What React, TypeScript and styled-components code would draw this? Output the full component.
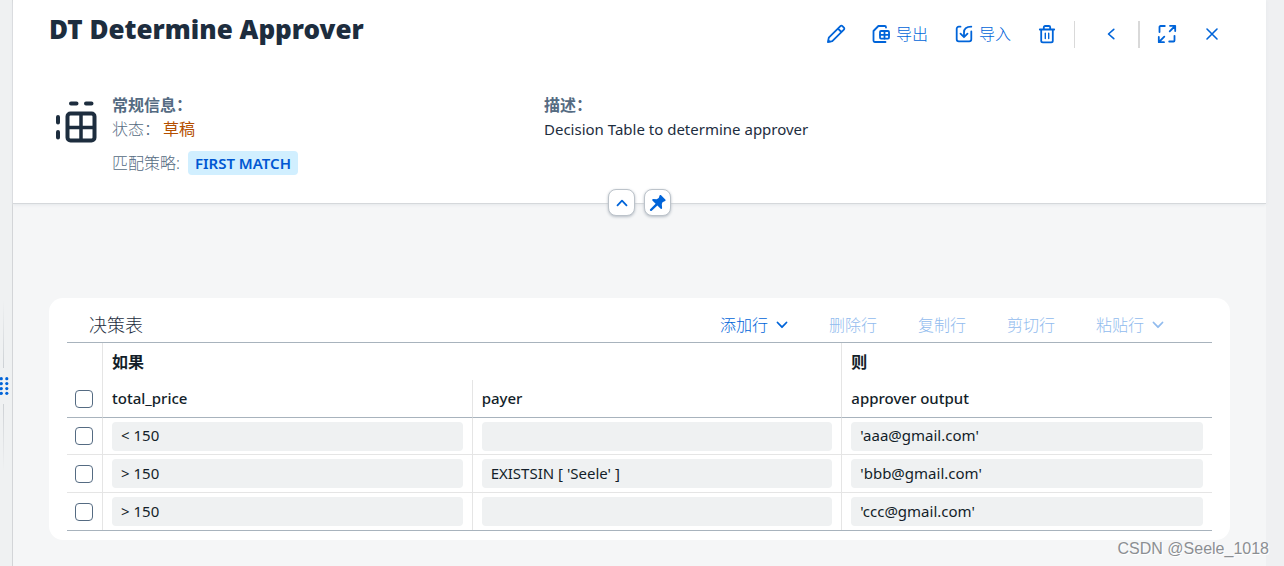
import React from "react";
import styled, { createGlobalStyle } from "styled-components";

const latin = `"Noto Sans", "Noto Sans CJK SC", sans-serif`;

const GlobalStyle = createGlobalStyle`
  *, *::before, *::after { box-sizing: border-box; }
  body {
    margin: 0;
    background: #f5f6f7;
    color: #1d2d3e;
    font: 15px/22px ${latin};
  }
  button, input { font: inherit; color: inherit; }
`;

const Page = styled.div`
  position: relative;
  display: flex;
  min-height: 100vh;
  overflow: hidden;
`;

const Splitter = styled.div`
  flex: none;
  display: flex;
  flex-direction: column;
  gap: 9px;
  width: 13px;
  padding-top: 300px;
  background: #eff1f2;
  border-right: 1px solid #d3d5d8;
`;

const SplitLine = styled.span<{ $fade: "top" | "bottom" }>`
  width: 1px;
  height: 68px;
  margin-left: 3px;
  background: linear-gradient(to ${(p) => p.$fade}, #cdd1d5, transparent);
`;

const Grip = styled.button`
  display: block;
  width: 10px;
  height: 18px;
  padding: 0;
  border: 0;
  background: none;
  svg { display: block; }
`;

const Main = styled.main`
  flex: 1;
  min-width: 0;
`;

const Gutter = styled.div`
  flex: none;
  width: 18px;
  background: #eff0f2;
`;

const Header = styled.header`
  position: relative;
  height: 204px;
  padding: 13px 36px 0;
  background: #fff;
  border-bottom: 1px solid #d5d8db;
  box-shadow: 0 1px 3px #e4e7ea;
`;

const TitleBar = styled.div`
  display: flex;
  justify-content: space-between;
  align-items: flex-start;
  height: 80px;
`;

const Title = styled.h1`
  margin: 0;
  font-size: 26px;
  line-height: 32px;
  font-weight: 900;
`;

const Actions = styled.div`
  display: flex;
  align-items: center;
  gap: 9px;
  padding-top: 3px;
`;

const Action = styled.button<{ $wide?: boolean }>`
  display: flex;
  align-items: center;
  justify-content: center;
  gap: 6px;
  min-width: 36px;
  height: 36px;
  padding: 0 ${(p) => (p.$wide ? 9 : 0)}px;
  border: 0;
  background: none;
  color: #0064d9;
  font-size: 16px;
  font-weight: 300;
  white-space: nowrap;
`;

const Divider = styled.span<{ $thick?: boolean }>`
  width: ${(p) => (p.$thick ? 2 : 1)}px;
  height: 27px;
  margin-right: ${(p) => (p.$thick ? 0 : 9)}px;
  background: #d9d9d9;
`;

const Facts = styled.div`
  display: grid;
  grid-template-columns: 495px 1fr;
`;

const General = styled.section`
  display: flex;
  gap: 15px;
  > svg { flex: none; margin: 8px 0 0 6px; }
`;

const FactTitle = styled.h2`
  margin: 0;
  color: #556b82;
  font-size: 16px;
  line-height: 24px;
  font-weight: 700;
`;

const Fact = styled.div`
  display: flex;
  align-items: center;
  gap: 3px;
  height: 24px;
  font-size: 16px;
  & + & { margin-top: 10px; }
`;

const FactLabel = styled.span`
  color: #556b82;
  font-weight: 300;
`;

const Status = styled.span`
  color: #b44f00;
`;

const Tag = styled.span`
  margin-left: 5px;
  padding: 0 7px;
  border-radius: 4px;
  background: #d1efff;
  color: #0057d2;
  font-size: 15px;
  line-height: 24px;
  font-weight: 600;
`;

const Description = styled.p`
  margin: 0;
  font-size: 15px;
  line-height: 24px;
`;

const HeaderToggles = styled.div`
  position: absolute;
  left: 0;
  right: 0;
  bottom: -13px;
  display: flex;
  justify-content: center;
  gap: 9px;
`;

const Toggle = styled.button`
  display: flex;
  align-items: center;
  justify-content: center;
  width: 27px;
  height: 27px;
  padding: 0;
  border: 1px solid #bcc3ca;
  border-radius: 8px;
  background: #fff;
  color: #0064d9;
  box-shadow: 0 1px 3px #b5bcc4;
`;

const Card = styled.section`
  margin: 94px 36px 26px;
  padding: 0 18px 9px;
  border-radius: 14px;
  background: #fff;
`;

const TableBar = styled.div`
  display: flex;
  align-items: center;
  justify-content: space-between;
  height: 44px;
  padding: 9px 32px 0 22px;
`;

const TableTitle = styled.h2`
  margin: 0;
  font-size: 18px;
  line-height: 26px;
  font-weight: 300;
`;

const TableActions = styled.div`
  display: flex;
  gap: 9px;
`;

const TableAction = styled.button`
  display: flex;
  align-items: center;
  gap: 8px;
  padding: 0 16px;
  border: 0;
  background: none;
  color: #0064d9;
  font-size: 16px;
  line-height: 24px;
  font-weight: 300;
  white-space: nowrap;
  &:disabled { color: #91bbee; }
`;

const Table = styled.table`
  width: 100%;
  table-layout: fixed;
  border-collapse: separate;
  border-spacing: 0;
  border-top: 1px solid #a8b3bd;
  border-bottom: 1px solid #a8b3bd;
`;

const CheckCol = styled.col`
  width: 36px;
`;

const HeadCell = styled.th<{ $group?: boolean; $last?: boolean; $check?: boolean }>`
  height: ${(p) => (p.$group ? 37 : 38)}px;
  padding: ${(p) => (p.$check ? "0 8px" : p.$group ? "0 9px" : "0 9px 2px")};
  border-right: ${(p) => (p.$last ? 0 : 1)}px solid #e5e5e5;
  border-bottom: ${(p) => (p.$group ? 0 : 1)}px solid #a8b3bd;
  color: #131e29;
  font-size: ${(p) => (p.$group ? 16 : 15)}px;
  line-height: 22px;
  font-weight: ${(p) => (p.$group ? 700 : 500)};
  text-align: left;
`;

const Cell = styled.td<{ $check?: boolean }>`
  height: 36px;
  padding: 0 ${(p) => (p.$check ? 8 : 9)}px;
  border-right: 1px solid #e5e5e5;
  &:last-child { border-right: 0; }
  tr + tr & { height: 38px; border-top: 1px solid #e5e5e5; }
`;

const Check = styled.input`
  appearance: none;
  display: block;
  width: 18px;
  height: 18px;
  margin: 0;
  border: 1px solid #556b82;
  border-radius: 4px;
  background: #fff;
`;

const Field = styled.input`
  display: block;
  width: 100%;
  height: 29px;
  padding: 0 9px 2px;
  border: 0;
  border-radius: 4px;
  background: #eff1f2;
  color: #131e29;
  font-size: 15px;
  line-height: 22px;
`;

const Watermark = styled.span`
  position: absolute;
  right: 15px;
  bottom: 6px;
  color: #8c8f93;
  font: 16px/22px "Liberation Sans", sans-serif;
  text-shadow: 1px 1px 0 #fff;
`;

const stroke = {
  fill: "none",
  stroke: "currentColor",
  strokeWidth: 1.8,
  strokeLinecap: "round" as const,
  strokeLinejoin: "round" as const,
};

const PencilIcon = () => (
  <svg width="20" height="20" viewBox="0 0 20 20" {...stroke} aria-hidden="true">
    <path d="M1.900 18.100l.9-4.400L14.400 2.100a1.400 1.400 0 0 1 2 0l1.500 1.500a1.400 1.400 0 0 1 0 2L6.300 17.200zM12 4.600l3.400 3.400M2.200 16.200l1.700 1.700" />
  </svg>
);

const ExportIcon = () => (
  <svg width="18" height="18" viewBox="0 0 18 18" {...stroke} aria-hidden="true">
    <path d="M14 2.600V2.200a1.200 1.200 0 0 0-1.200-1.200H6.400L1.500 6v9.800a1.200 1.200 0 0 0 1.200 1.200H13.500" />
    <rect x="8" y="6" width="9" height="7.600" rx="1" />
    <path d="M12.500 6v7.600M8 9.800h9" />
  </svg>
);

const ImportIcon = () => (
  <svg width="18" height="18" viewBox="0 0 18 18" {...stroke} aria-hidden="true">
    <path d="M5.500 1.700H3.700a2 2 0 0 0-2 2v10.600a2 2 0 0 0 2 2h10.600a2 2 0 0 0 2-2V6.500M16.300 1.700C12 1.700 9 3.700 9 7.500v4.500M5.500 8.700L9 12.200l3.500-3.500" />
  </svg>
);

const TrashIcon = () => (
  <svg width="18" height="20" viewBox="0 0 18 20" {...stroke} aria-hidden="true">
    <path d="M1.800 5.500h14.400M5.800 5.300V3.300a1.300 1.300 0 0 1 1.300-1.300h3.800a1.300 1.300 0 0 1 1.300 1.300v2M3.200 5.700v11a1.600 1.600 0 0 0 1.600 1.600h8.400a1.600 1.600 0 0 0 1.600-1.600v-11" />
    <path strokeWidth={1.400} d="M7.300 9.300v5.200M10.700 9.300v5.200" />
  </svg>
);

const BackIcon = () => (
  <svg width="10" height="14" viewBox="0 0 10 14" {...stroke} strokeWidth={1.600} aria-hidden="true">
    <path d="M7.800 2.300L2.500 7l5.300 4.700" />
  </svg>
);

const FullScreenIcon = () => (
  <svg width="20" height="20" viewBox="0 0 20 20" {...stroke} aria-hidden="true">
    <path d="M7.800 2H3.500a1 1 0 0 0-1 1v5M12.200 17.500h4.300a1 1 0 0 0 1-1v-4.700M13 1.800h5.200v5.200M18 2l-5.300 5.300M7 18.200H1.800V13M2 18l5.300-5.300" />
  </svg>
);

const CloseIcon = () => (
  <svg width="14" height="14" viewBox="0 0 14 14" {...stroke} strokeWidth={1.600} aria-hidden="true">
    <path d="M2 2l10 10M12 2L2 12" />
  </svg>
);

const ChevronDown = () => (
  <svg width="12" height="8" viewBox="0 0 12 8" {...stroke} aria-hidden="true">
    <path d="M1.500 1.500L6 6.200l4.500-4.700" />
  </svg>
);

const ChevronUp = () => (
  <svg width="12" height="8" viewBox="0 0 12 8" {...stroke} aria-hidden="true">
    <path d="M1.500 6.300L6 1.700l4.500 4.600" />
  </svg>
);

const PinIcon = () => (
  <svg width="18" height="18" viewBox="0 0 18 18" fill="currentColor" aria-hidden="true">
    <path d="M10.700 1.200c.4-.4 1-.4 1.400 0l4.200 4.200c.5.500.4 1.200-.2 1.500l-2.600 1.300-.7 1.900.3 4c0 .8-.8 1.200-1.400.7L8.400 11.600 2.500 17 1 16.700.9 15.500 6.600 9.700 3.400 6.500c-.5-.6-.1-1.400.7-1.400l3.600.1 2-1.200z" />
  </svg>
);

const DecisionTableIcon = () => (
  <svg width="42" height="42" viewBox="0 0 42 42" fill="none" stroke="#1d2d3e" strokeWidth="4" aria-hidden="true">
    <rect x="12.500" y="12.500" width="27" height="27" rx="3" />
    <path strokeWidth="3.500" d="M26 12.500v27M12.500 26.500h27" />
    <path strokeLinecap="round" d="M16 2.500h5.500M31 2.500h5.500M3 16v5.500M3 31v5.500" />
  </svg>
);

const GripIcon = () => (
  <svg width="10" height="18" viewBox="0 0 10 18" fill="#0064d9" aria-hidden="true">
    {[1.700, 6.600, 11.600, 16.300].map((y) => (
      <g key={y}>
        <circle cx="1.300" cy={y} r="1.600" />
        <circle cx="6.800" cy={y} r="1.600" />
      </g>
    ))}
  </svg>
);

const rows = [
  { price: "< 150", payer: "", output: "'aaa@gmail.com'" },
  { price: "> 150", payer: "EXISTSIN [ 'Seele' ]", output: "'bbb@gmail.com'" },
  { price: "> 150", payer: "", output: "'ccc@gmail.com'" },
];

export default function App() {
  return (
    <Page>
      <GlobalStyle />
      <Splitter>
        <SplitLine $fade="top" />
        <Grip aria-label="调整大小"><GripIcon /></Grip>
        <SplitLine $fade="bottom" />
      </Splitter>
      <Main>
        <Header>
          <TitleBar>
            <Title>DT Determine Approver</Title>
            <Actions>
              <Action aria-label="编辑"><PencilIcon /></Action>
              <Action $wide><ExportIcon />导出</Action>
              <Action $wide><ImportIcon />导入</Action>
              <Action aria-label="删除"><TrashIcon /></Action>
              <Divider />
              <Action aria-label="返回"><BackIcon /></Action>
              <Divider $thick />
              <Action aria-label="全屏"><FullScreenIcon /></Action>
              <Action aria-label="关闭"><CloseIcon /></Action>
            </Actions>
          </TitleBar>
          <Facts>
            <General>
              <DecisionTableIcon />
              <div>
                <FactTitle>常规信息：</FactTitle>
                <Fact><FactLabel>状态：</FactLabel><Status>草稿</Status></Fact>
                <Fact><FactLabel>匹配策略:</FactLabel><Tag>FIRST MATCH</Tag></Fact>
              </div>
            </General>
            <section>
              <FactTitle>描述：</FactTitle>
              <Description>Decision Table to determine approver</Description>
            </section>
          </Facts>
          <HeaderToggles>
            <Toggle aria-label="收起标题"><ChevronUp /></Toggle>
            <Toggle aria-label="固定标题"><PinIcon /></Toggle>
          </HeaderToggles>
        </Header>
        <Card>
          <TableBar>
            <TableTitle>决策表</TableTitle>
            <TableActions>
              <TableAction>添加行<ChevronDown /></TableAction>
              <TableAction disabled>删除行</TableAction>
              <TableAction disabled>复制行</TableAction>
              <TableAction disabled>剪切行</TableAction>
              <TableAction disabled>粘贴行<ChevronDown /></TableAction>
            </TableActions>
          </TableBar>
          <Table>
            <colgroup>
              <CheckCol />
              <col />
              <col />
              <col />
            </colgroup>
            <thead>
              <tr>
                <HeadCell as="td" $group />
                <HeadCell $group colSpan={2}>如果</HeadCell>
                <HeadCell $group $last>则</HeadCell>
              </tr>
              <tr>
                <HeadCell $check><Check type="checkbox" aria-label="全选" /></HeadCell>
                <HeadCell>total_price</HeadCell>
                <HeadCell>payer</HeadCell>
                <HeadCell $last>approver output</HeadCell>
              </tr>
            </thead>
            <tbody>
              {rows.map((row, i) => (
                <tr key={i}>
                  <Cell $check><Check type="checkbox" aria-label={`选择行 ${i + 1}`} /></Cell>
                  <Cell><Field readOnly aria-label="total_price" defaultValue={row.price} /></Cell>
                  <Cell><Field readOnly aria-label="payer" defaultValue={row.payer} /></Cell>
                  <Cell><Field readOnly aria-label="approver output" defaultValue={row.output} /></Cell>
                </tr>
              ))}
            </tbody>
          </Table>
        </Card>
      </Main>
      <Gutter />
      <Watermark>CSDN @Seele_1018</Watermark>
    </Page>
  );
}
